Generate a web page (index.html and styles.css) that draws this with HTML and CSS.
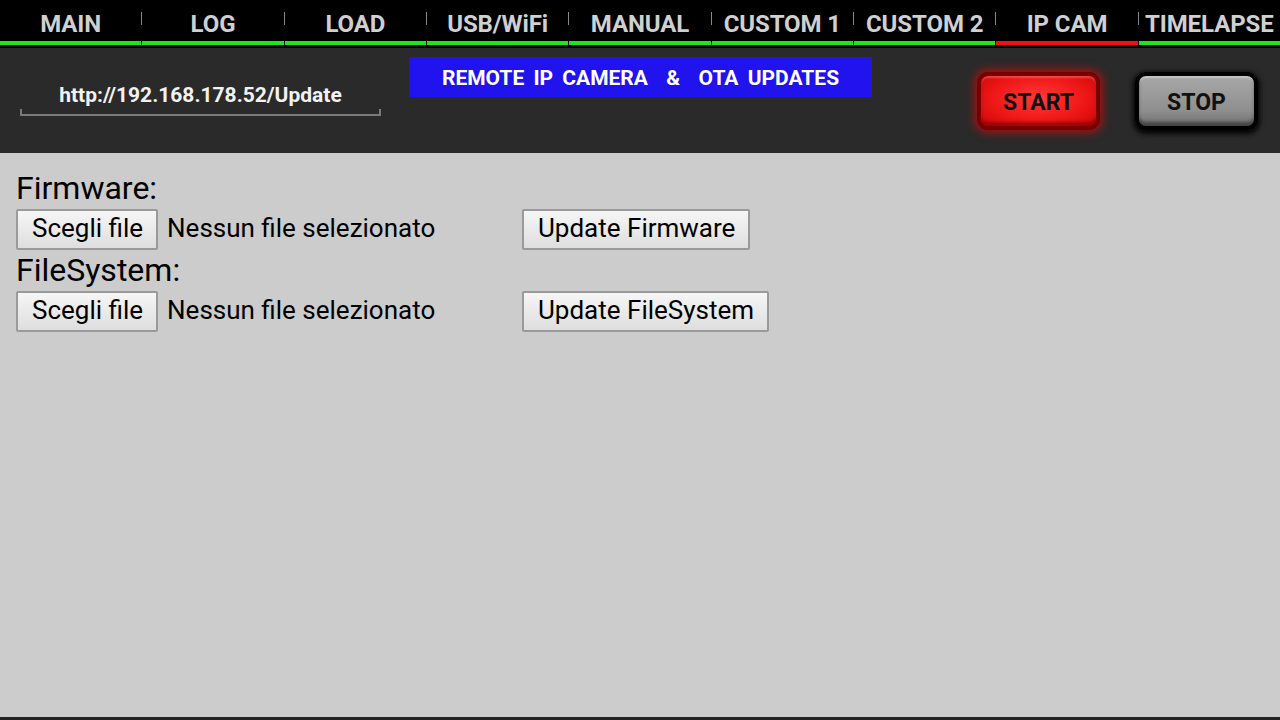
FILE: index.html
```html
<!DOCTYPE html>
<html lang="it">
<head>
<meta charset="utf-8">
<title>Remote IP Camera &amp; OTA Updates</title>
<link rel="stylesheet" href="styles.css">
</head>
<body>
<div class="app">
  <nav class="tabs">
    <div class="tab">MAIN</div>
    <div class="tab">LOG</div>
    <div class="tab">LOAD</div>
    <div class="tab">USB/WiFi</div>
    <div class="tab">MANUAL</div>
    <div class="tab">CUSTOM 1</div>
    <div class="tab">CUSTOM 2</div>
    <div class="tab active">IP CAM</div>
    <div class="tab">TIMELAPSE</div>
  </nav>
  <header class="panel">
    <div class="url">
      <div class="url-text">http://192.168.178.52/Update</div>
      <div class="url-line"></div>
    </div>
    <div class="title">REMOTE IP CAMERA &nbsp;&amp;&nbsp; OTA UPDATES</div>
    <div class="spacer"></div>
    <button class="hw-btn start">START</button>
    <button class="hw-btn stop">STOP</button>
  </header>
  <main class="content">
    <div class="label">Firmware:</div>
    <div class="row">
      <div class="file">
        <span class="btn">Scegli file</span>
        <span class="file-name">Nessun file selezionato</span>
      </div>
      <span class="btn">Update Firmware</span>
    </div>
    <div class="label">FileSystem:</div>
    <div class="row">
      <div class="file">
        <span class="btn">Scegli file</span>
        <span class="file-name">Nessun file selezionato</span>
      </div>
      <span class="btn">Update FileSystem</span>
    </div>
  </main>
  <div class="bottom"></div>
</div>
</body>
</html>
```
FILE: styles.css
```css
* { box-sizing: border-box; }
html, body { margin: 0; padding: 0; }
body {
  width: 1280px;
  height: 720px;
  overflow: hidden;
  font-family: Roboto, "Liberation Sans", sans-serif;
  background: #cccccc;
}
.app {
  display: flex;
  flex-direction: column;
  height: 720px;
}
.tabs {
  display: grid;
  grid-template-columns: repeat(9, 1fr);
  column-gap: 1px;
  background: #000;
  height: 48px;
  padding-bottom: 3px;
}
.tab {
  position: relative;
  color: #d0d0d0;
  font-weight: 700;
  font-size: 24px;
  text-align: center;
  line-height: 48px;
  height: 45px;
  border-bottom: 4px solid #1ee61e;
  white-space: nowrap;
  letter-spacing: -0.1px;
}
.tab.active { border-bottom-color: #f01010; }
.tab + .tab::before {
  content: "";
  position: absolute;
  left: -1px;
  top: 12px;
  width: 1px;
  height: 13px;
  background: #888;
}
.panel {
  display: flex;
  align-items: flex-start;
  height: 105px;
  background: #2a2a2a;
  padding: 0 22px 0 20px;
}
.url {
  width: 361px;
  margin-top: 33px;
}
.url-text {
  color: #f2f2f2;
  font-weight: 700;
  font-size: 21px;
  text-align: center;
  line-height: 28px;
}
.url-line {
  height: 7px;
  border: 2px solid #7a7a7a;
  border-top: none;
}
.title {
  margin-left: 28px;
  margin-top: 9px;
  width: 463px;
  height: 40px;
  background: #2013ee;
  color: #fff;
  font-weight: 700;
  font-size: 21px;
  line-height: 42px;
  text-align: center;
  word-spacing: 4px;
  white-space: nowrap;
}
.spacer { flex: 1; }
.hw-btn {
  margin-top: 24px;
  width: 123px;
  height: 58px;
  border-radius: 11px;
  font-family: Roboto, "Liberation Sans", sans-serif;
  font-weight: 700;
  font-size: 23px;
  line-height: 46px;
  color: #111;
  padding: 3px 0 0;
  cursor: pointer;
}
.start {
  border: 4px solid #7a0000;
  background: radial-gradient(ellipse at 50% 45%, #ff3a3a 0%, #f01818 55%, #c80606 100%);
  box-shadow: 0 0 9px 3px rgba(255, 0, 0, 0.55), inset 0 -4px 3px rgba(120, 0, 0, 0.6), inset 0 2px 2px rgba(255, 150, 150, 0.4);
}
.stop {
  margin-left: 35px;
  border: 4px solid #000;
  background: linear-gradient(#a8a8a8, #8e8e8e 70%, #6f6f6f);
  box-shadow: 0 2px 5px 2px rgba(0, 0, 0, 0.9), inset 0 -4px 3px rgba(40, 40, 40, 0.6), inset 0 2px 2px rgba(230, 230, 230, 0.5);
}
.content {
  flex: 1;
  background: #cccccc;
  padding: 15px 16px 0;
  color: #000;
}
.label {
  font-size: 32px;
  line-height: 41px;
  height: 41px;
}
.row {
  display: flex;
  align-items: baseline;
  height: 41px;
}
.file {
  display: flex;
  align-items: baseline;
  width: 506px;
}
.btn {
  display: inline-block;
  height: 41px;
  line-height: 35px;
  padding: 0 13px 0 14px;
  font-size: 26px;
  border: 2px solid #9a9a9a;
  border-radius: 2px;
  background: linear-gradient(#f6f6f6, #dedede);
  color: #000;
  white-space: nowrap;
}
.file-name {
  margin-left: 9px;
  font-size: 26px;
  white-space: nowrap;
}
.bottom {
  height: 3px;
  background: #222;
}
```
